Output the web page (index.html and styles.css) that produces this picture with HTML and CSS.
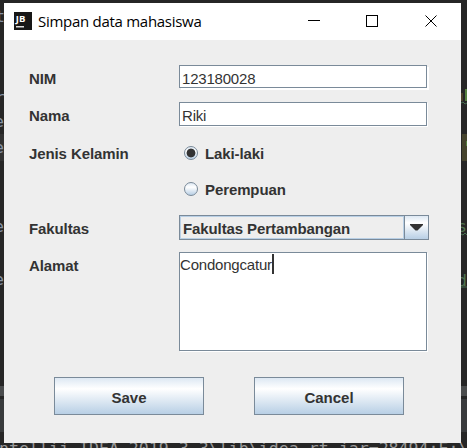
FILE: index.html
```
<!DOCTYPE html>
<html lang="id">
<head>
<meta charset="utf-8">
<title>Simpan data mahasiswa</title>
<link rel="stylesheet" href="styles.css">
</head>
<body>
<div class="editor" aria-hidden="true">
  <svg class="code" width="467" height="448">
    <rect class="highlight" x="0" y="134" width="4" height="27"/>
    <rect class="bar" x="0" y="386" width="467" height="10"/>
    <rect class="panel" x="0" y="399" width="467" height="33"/>
    <rect class="olive" x="462" y="134" width="5" height="27"/>
    <rect class="brown" x="461" y="93" width="2" height="8"/>
    <rect class="green" x="465" y="89" width="2" height="12"/>
    <rect class="green" x="466" y="141" width="1" height="5"/>
    <path class="wave" d="M461 103l2-1 2 2 2-1M461 234l2 1 2-2 2 2M461 287h6"/>
    <text x="-5" y="22">t</text>
    <text x="-5" y="103">r</text>
    <text x="-6" y="127">e</text>
    <text x="-6" y="153">e</text>
    <text x="-6" y="232">e</text>
    <text x="-6" y="285">e</text>
    <text class="string" x="457" y="232">s</text>
    <text class="string" x="457" y="286">d</text>
    <text class="log" x="-1" y="454">ntellij IDEA 2019.3.3\lib\idea_rt.jar=28494:E:\</text>
  </svg>
</div>
<main class="window">
  <header class="titlebar">
    <svg class="logo" width="18" height="18">
      <rect width="18" height="18" fill="#171717"/>
      <text x="1.8" y="9.6">JB</text>
      <rect x="2" y="14" width="8" height="1.5" fill="#ddd"/>
    </svg>
    <h1>Simpan data mahasiswa</h1>
    <svg class="controls" width="132" height="14" fill="none" stroke="#000" shape-rendering="crispEdges">
      <path d="M0 6.5h12"/>
      <rect x="58.5" y="1.5" width="11" height="11"/>
      <path d="M117.5 1.5l11 11M128.5 1.5l-11 11" shape-rendering="auto"/>
    </svg>
  </header>
  <form class="form">
    <span class="label">NIM</span>
    <div class="field nim"><span>123180028</span></div>
    <span class="label">Nama</span>
    <div class="field"><span>Riki</span></div>
    <span class="label gender">Jenis Kelamin</span>
    <div class="option gender">
      <i class="radio checked"></i><b>Laki-laki</b>
    </div>
    <div class="option second">
      <i class="radio"></i><b>Perempuan</b>
    </div>
    <span class="label">Fakultas</span>
    <div class="combo">
      <div class="value"><span>Fakultas Pertambangan</span></div>
      <div class="arrow"><svg width="13" height="7"><path d="M0 0h13v1L7.500 6.500h-2L0 1z" fill="#333"/></svg></div>
    </div>
    <span class="label">Alamat</span>
    <div class="field area"><span>Condongcatur</span><i class="caret"></i></div>
  </form>
  <footer class="actions">
    <div class="button"><span class="save">Save</span></div>
    <div class="button"><span>Cancel</span></div>
  </footer>
</main>
</body>
</html>
```
FILE: styles.css
```
* { box-sizing: border-box; }
body {
  margin: 0;
  width: 467px;
  height: 448px;
  overflow: hidden;
  position: relative;
  background: #262626;
  color: #333;
  font: 15px/18px "Liberation Sans", Arial, sans-serif;
}
.code { display: block; font: 16.6px "DejaVu Sans Mono", monospace; }
.code text { fill: #8793a5; }
.code .string { fill: #50734f; }
.code .log { fill: #989898; }
.highlight { fill: #323232; }
.bar { fill: #4a4c4d; }
.panel { fill: #383a3c; }
.olive { fill: #45432d; }
.brown { fill: #4c402a; }
.green { fill: #55803f; }
.wave { fill: none; stroke: #476f50; }
.window {
  position: absolute;
  left: 4px;
  top: 3px;
  width: 457px;
  height: 440px;
  background: #eee;
}
.titlebar {
  display: flex;
  align-items: flex-start;
  height: 37px;
  padding: 9px 0 0 10px;
  background: #fff;
}
.logo text { font: bold 9.5px "Open Sans", sans-serif; fill: #fff; }
h1 {
  margin: 0 0 0 6px;
  width: 270px;
  color: #000;
  font: 15px/19px "Open Sans", sans-serif;
  letter-spacing: -0.28px;
  white-space: nowrap;
}
.controls { margin-top: 2px; }
.form {
  display: grid;
  grid-template-columns: 150px 250px;
  grid-template-rows: 37px 37px 38px 38px 37px 100px;
  align-items: start;
  padding: 25px 0 0 25px;
}
.label { font-weight: bold; padding-top: 5px; letter-spacing: -0.1px; }
.gender { margin-top: 1px; }
.field {
  width: 248px;
  height: 24px;
  border: 1px solid #7a8a99;
  background: #fff;
  box-shadow: 1px 1px #fff;
  padding: 4px 2px 0;
  letter-spacing: -0.2px;
}
.nim { height: 23px; box-shadow: 2px 2px #fff; }
.area { display: flex; height: 99px; padding: 3px 0 0; }
.caret { width: 2px; height: 20px; margin-top: -2px; background: #333; }
.option { display: flex; align-items: center; height: 26px; gap: 7px; padding-left: 5px; }
.option b { padding-top: 2px; letter-spacing: -0.1px; }
.second { grid-column: 2; }
.option.second { margin-top: -1px; }
.radio {
  width: 14px;
  height: 14px;
  border: 1px solid #7a8a99;
  border-radius: 50%;
  background: linear-gradient(#dde8f3, #fff 35%, #b8cfe5);
}
.checked { background: radial-gradient(circle, #333 0 4px, transparent 4.8px), linear-gradient(#dde8f3, #fff 35%, #b8cfe5); }
.combo {
  display: grid;
  grid-template-columns: 224px 1fr;
  width: 250px;
  height: 25px;
  border: 1px solid #7a8a99;
}
.value { border: 1px solid #b8cfe5; padding: 3px 2px 0; font-weight: bold; letter-spacing: -0.1px; }
.arrow {
  display: grid;
  place-items: center;
  border-left: 1px solid #7a8a99;
  background: linear-gradient(#dde8f3, #fff 30%, #b8cfe5);
}
.actions { display: flex; gap: 50px; padding: 25px 0 0 50px; }
.button {
  width: 150px;
  height: 38px;
  border: 1px solid #7a8a99;
  background: linear-gradient(#dde8f3, #fff 30%, #b8cfe5);
  font-weight: bold;
  line-height: 40px;
  text-align: center;
}
```
